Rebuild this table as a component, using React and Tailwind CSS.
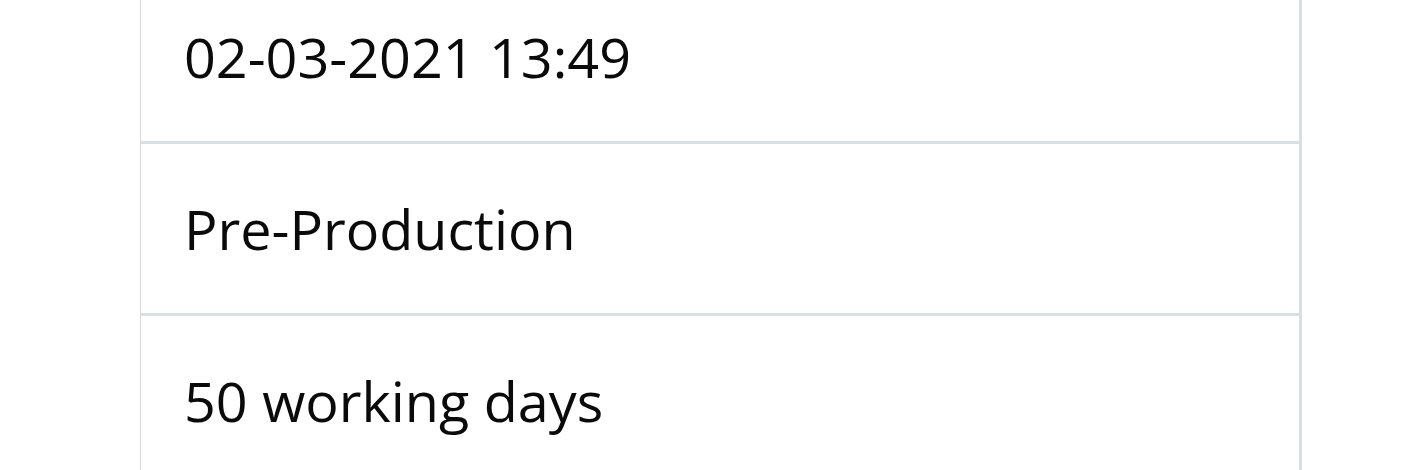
import React from 'react';

const ROWS = ['02-03-2021 13:49', 'Pre-Production', '50 working days'];

const App = () => {
  return (
    <div className="h-[470px] w-full overflow-hidden bg-white font-['Open_Sans',sans-serif]">
      <div className="-mt-[28px] ml-[140px] w-[1162px] border-l border-r-[3px] border-l-[#d4d8da] border-r-[#d9e0e3]">
        {ROWS.map((r) => (
          <div
            key={r}
            className="border-b-[3px] border-[#d9e0e3] py-[42px] pl-[43px] text-[55.7px] leading-[85px] text-[#0a0a0a]"
          >
            {r}
          </div>
        ))}
      </div>
    </div>
  );
};

export default App;
